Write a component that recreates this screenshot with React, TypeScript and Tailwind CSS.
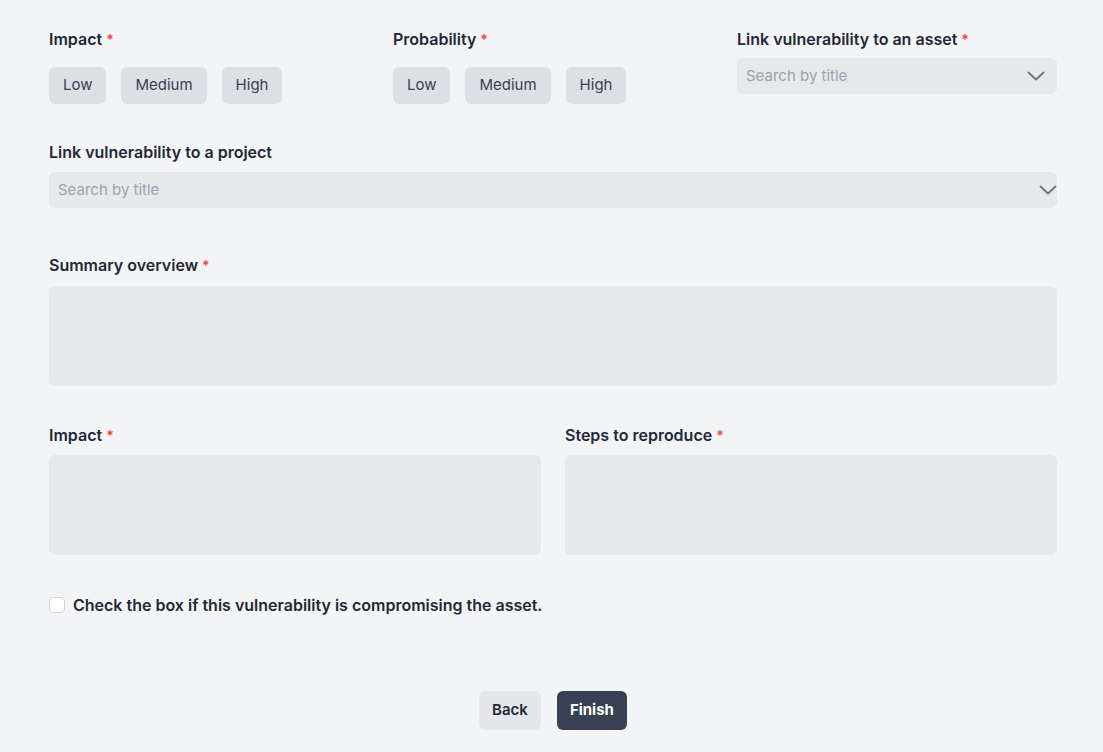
const levels = ["Low", "Medium", "High"];

function Label({ text, required = true }: { text: string; required?: boolean }) {
  return (
    <p className="h-5 text-[16px] leading-[19px] font-semibold text-[#1f2937]">
      {text}
      {required && <span className="ml-1 text-[14px] text-[#ef4444]">*</span>}
    </p>
  );
}

function Chevron() {
  return (
    <svg width="18" height="10" viewBox="0 0 18 10" fill="none" className="shrink-0">
      <path d="M1.5 1.5 9 8.5l7.5-7" stroke="#6b7280" strokeWidth="1.8" strokeLinecap="round" strokeLinejoin="round" />
    </svg>
  );
}

function LevelPicker() {
  return (
    <div className="mt-[17px] flex gap-[15px]">
      {levels.map((level) => (
        <button
          key={level}
          className="h-[37px] rounded-md bg-[#dcdfe4] px-[14px] text-[15px] text-[#374151]"
        >
          {level}
        </button>
      ))}
    </div>
  );
}

function SearchSelect({ wide = false }: { wide?: boolean }) {
  return (
    <div
      className={
        wide
          ? "mt-[9px] flex h-9 items-center justify-between rounded-md bg-[#e6e8ec] pr-0 pl-[9px]"
          : "mt-2 flex h-9 items-center justify-between rounded-md bg-[#e6e8ec] pr-3 pl-[9px]"
      }
    >
      <span className="text-[15px] text-[#9ca3af]">Search by title</span>
      <Chevron />
    </div>
  );
}

function TextBox() {
  return <div className="mt-[9px] h-[100px] rounded-md bg-[#e6e8ec]" />;
}

export default function App() {
  return (
    <div
      className="min-h-[752px] bg-[#f3f4f6] pt-[30px] pr-[46px] pl-[49px]"
      style={{ fontFamily: "Inter, 'Open Sans', sans-serif" }}
    >
      <div className="grid grid-cols-3 gap-6">
        <div>
          <Label text="Impact" />
          <LevelPicker />
        </div>
        <div>
          <Label text="Probability" />
          <LevelPicker />
        </div>
        <div>
          <Label text="Link vulnerability to an asset" />
          <SearchSelect />
        </div>
      </div>

      <div className="mt-[39px]">
        <Label text="Link vulnerability to a project" required={false} />
        <SearchSelect wide />
      </div>

      <div className="mt-12">
        <Label text="Summary overview" />
        <div className="mt-[10px] h-[100px] rounded-md bg-[#e6e8ec]" />
      </div>

      <div className="mt-10 grid grid-cols-2 gap-6">
        <div>
          <Label text="Impact" />
          <TextBox />
        </div>
        <div>
          <Label text="Steps to reproduce" />
          <TextBox />
        </div>
      </div>

      <label className="mt-[38px] flex items-center gap-2">
        <span className="size-4 rounded-[4px] border border-[#d1d5db] bg-white" />
        <span className="text-[16px] font-semibold text-[#1f2937]">
          Check the box if this vulnerability is compromising the asset.
        </span>
      </label>

      <div className="mt-[74px] flex justify-center gap-4">
        <button className="h-[39px] rounded-md bg-[#e5e7eb] px-[13px] text-[15px] font-semibold text-[#1f2937]">
          Back
        </button>
        <button className="h-[39px] rounded-md bg-[#374151] px-[13px] text-[15px] font-bold text-white">
          Finish
        </button>
      </div>
    </div>
  );
}
